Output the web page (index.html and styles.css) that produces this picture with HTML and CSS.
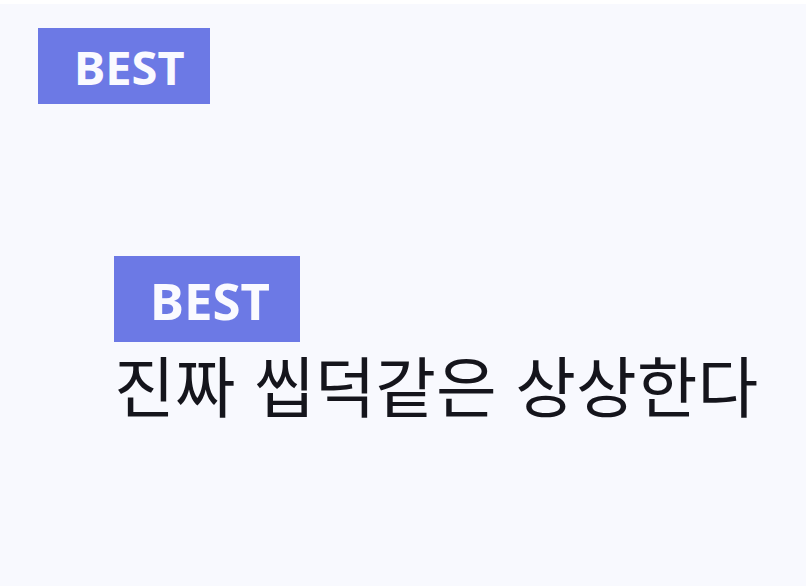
FILE: index.html
```html
<!DOCTYPE html>
<html lang="ko">
<head>
<meta charset="utf-8">
<title>BEST</title>
<link rel="stylesheet" href="styles.css">
</head>
<body>
<main class="comments">
  <span class="badge">BEST</span>
  <article class="reply">
    <span class="badge badge-large">BEST</span>
    <p class="text">진짜 씹덕같은 상상한다</p>
  </article>
</main>
</body>
</html>
```
FILE: styles.css
```css
body {
  box-sizing: border-box;
  margin: 0;
  min-height: 100vh;
  border-top: 4px solid #fff;
  background: #f8f9fe;
  font-family: "Noto Sans", "Noto Sans CJK KR", sans-serif;
}
.comments {
  display: flex;
  flex-direction: column;
  align-items: flex-start;
  gap: 152px;
  padding: 24px 38px;
}
.badge {
  display: block;
  box-sizing: border-box;
  width: 172px;
  padding: 2px 0 0 36px;
  background: #6c79e5;
  color: #fafaff;
  font-size: 47px;
  font-weight: 700;
  line-height: 74px;
}
.reply {
  margin-left: 76px;
}
.badge-large {
  width: 186px;
  font-size: 51px;
  line-height: 84px;
}
.text {
  margin: 0;
  color: #15151c;
  font-family: "Noto Sans CJK KR", sans-serif;
  font-size: 66px;
  line-height: 82px;
  white-space: nowrap;
}
```
